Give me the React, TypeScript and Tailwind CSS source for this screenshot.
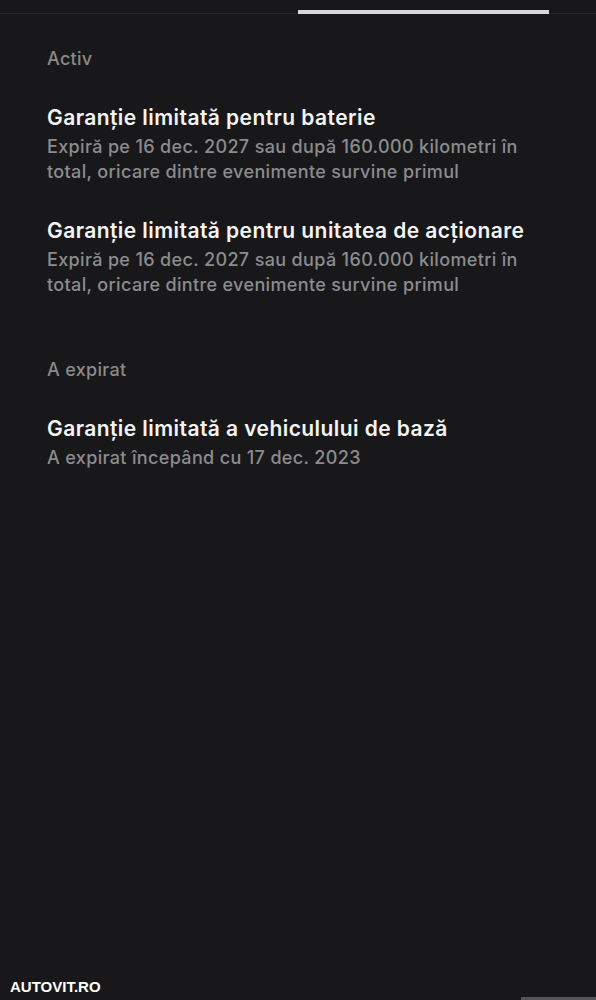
import React from 'react';

type Warranty = {
  title: string;
  detail: string;
};

const ACTIVE: Warranty[] = [
  {
    title: 'Garanție limitată pentru baterie',
    detail: 'Expiră pe 16 dec. 2027 sau după 160.000 kilometri în total, oricare dintre evenimente survine primul',
  },
  {
    title: 'Garanție limitată pentru unitatea de acționare',
    detail: 'Expiră pe 16 dec. 2027 sau după 160.000 kilometri în total, oricare dintre evenimente survine primul',
  },
];

const EXPIRED: Warranty[] = [
  {
    title: 'Garanție limitată a vehiculului de bază',
    detail: 'A expirat începând cu 17 dec. 2023',
  },
];

function WarrantyItem({ item }: { item: Warranty }) {
  return (
    <div className="flex flex-col">
      <h3 className="text-[21px] leading-[28px] font-semibold tracking-[0.43px] text-[#f4f4f4]">
        {item.title}
      </h3>
      <p className="mt-[2px] text-[18px] leading-[25px] font-medium tracking-[0.35px] text-[#8c8c8e] max-w-[490px]">
        {item.detail}
      </p>
    </div>
  );
}

function Section({ label, items }: { label: string; items: Warranty[] }) {
  return (
    <section className="flex flex-col gap-[33px]">
      <p className="text-[18px] leading-[25px] font-medium tracking-[0.3px] text-[#8a8a8c]">{label}</p>
      {items.map((item) => (
        <WarrantyItem key={item.title} item={item} />
      ))}
    </section>
  );
}

export default function App() {
  return (
    <div
      className="w-full h-[1000px] bg-[#18181a] flex flex-col overflow-hidden"
      style={{ fontFamily: 'Inter, "Noto Sans", sans-serif' }}
    >
      {/* Tab indicator */}
      <div className="relative mt-[10px] h-[4px]">
        <div className="absolute left-0 right-0 top-[3px] h-px bg-[#26262a]" />
        <div className="relative ml-[298px] w-[251px] h-[4px] bg-[#d8d8d8]" />
      </div>

      <div className="flex flex-col gap-[60px] pl-[47px] pr-[30px] pt-[32px]">
        <Section label="Activ" items={ACTIVE} />
        <Section label="A expirat" items={EXPIRED} />
      </div>

      <div className="mt-auto flex items-end justify-between">
        <span
          className="ml-[10px] mb-[5px] text-[15px] leading-[16px] font-bold text-white"
          style={{ fontFamily: '"Liberation Sans", Arial, sans-serif' }}
        >
          AUTOVIT.RO
        </span>
        <div className="w-[75px] h-[3px] bg-[#555557]" />
      </div>
    </div>
  );
}
